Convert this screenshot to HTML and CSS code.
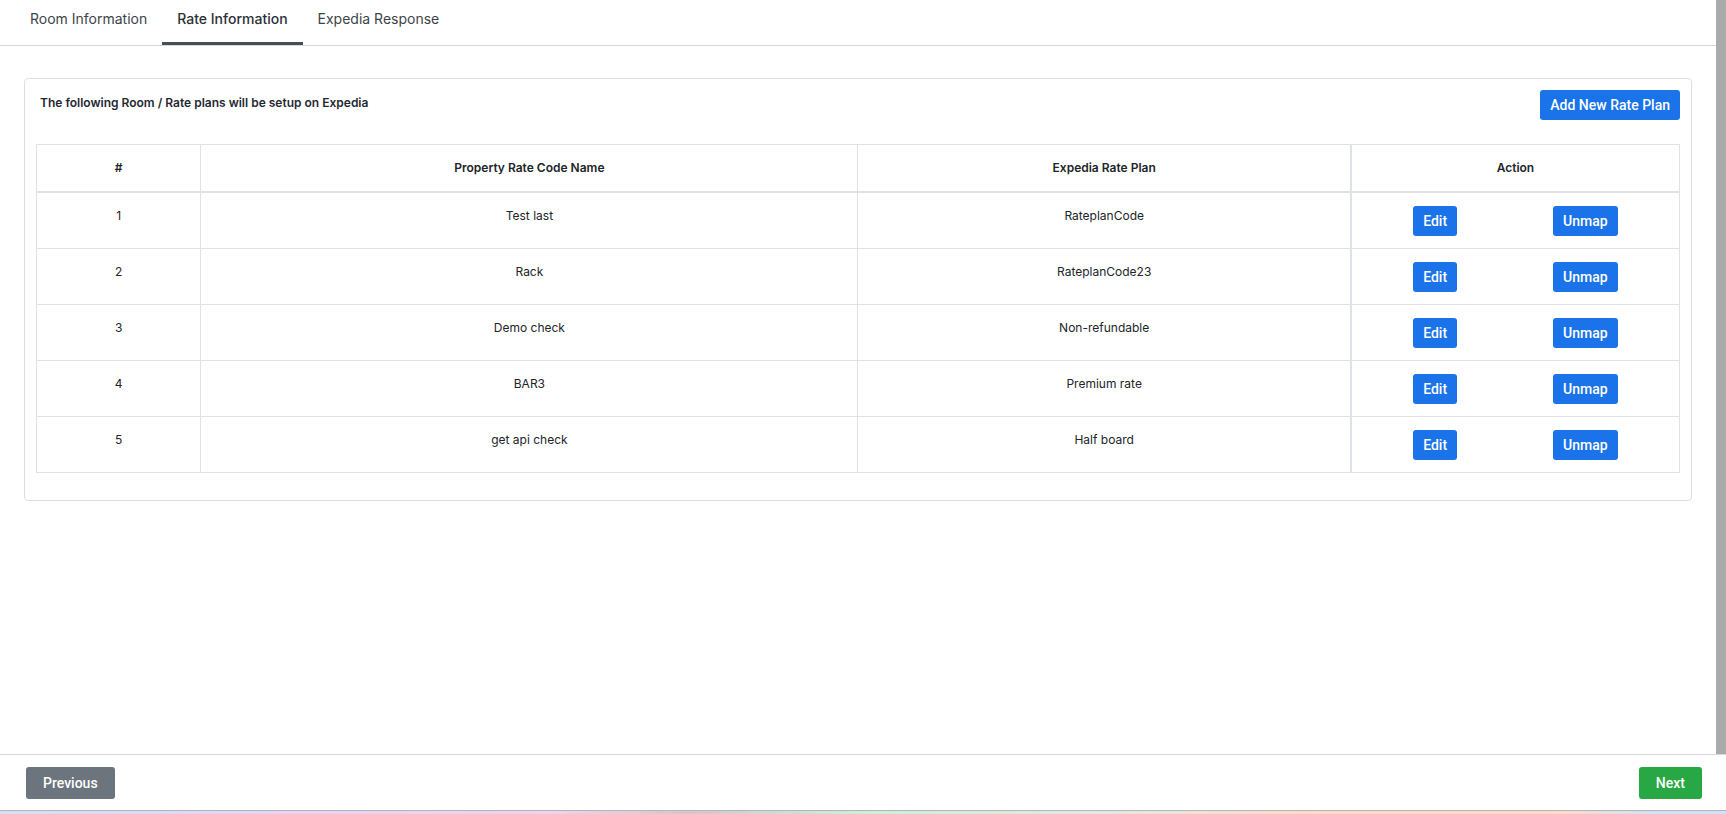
FILE: index.html
```html
<!DOCTYPE html>
<html lang="en">
<head>
<meta charset="utf-8">
<title>Rate Information</title>
<link rel="stylesheet" href="styles.css">
</head>
<body>
<div class="app">
  <div class="main">
    <nav class="tabs">
      <div class="tab">Room Information</div>
      <div class="tab active">Rate Information</div>
      <div class="tab">Expedia Response</div>
    </nav>
    <div class="content">
      <div class="card">
        <div class="card-head">
          <div class="card-title">The following Room / Rate plans will be setup on Expedia</div>
          <button class="btn btn-blue btn-add">Add New Rate Plan</button>
        </div>
        <table class="grid">
          <colgroup>
            <col class="c1"><col class="c2"><col class="c3"><col class="c4">
          </colgroup>
          <thead>
            <tr><th>#</th><th>Property Rate Code Name</th><th>Expedia Rate Plan</th><th class="act">Action</th></tr>
          </thead>
          <tbody>
            <tr><td>1</td><td>Test last</td><td>RateplanCode</td><td class="act"><div class="acts"><button class="btn btn-blue btn-sm">Edit</button><button class="btn btn-blue btn-sm">Unmap</button></div></td></tr>
            <tr><td>2</td><td>Rack</td><td>RateplanCode23</td><td class="act"><div class="acts"><button class="btn btn-blue btn-sm">Edit</button><button class="btn btn-blue btn-sm">Unmap</button></div></td></tr>
            <tr><td>3</td><td>Demo check</td><td>Non-refundable</td><td class="act"><div class="acts"><button class="btn btn-blue btn-sm">Edit</button><button class="btn btn-blue btn-sm">Unmap</button></div></td></tr>
            <tr><td>4</td><td>BAR3</td><td>Premium rate</td><td class="act"><div class="acts"><button class="btn btn-blue btn-sm">Edit</button><button class="btn btn-blue btn-sm">Unmap</button></div></td></tr>
            <tr><td>5</td><td>get api check</td><td>Half board</td><td class="act"><div class="acts"><button class="btn btn-blue btn-sm">Edit</button><button class="btn btn-blue btn-sm">Unmap</button></div></td></tr>
          </tbody>
        </table>
      </div>
    </div>
  </div>
  <div class="rail"></div>
</div>
<footer class="footer">
  <button class="btn btn-gray btn-foot">Previous</button>
  <button class="btn btn-green btn-foot">Next</button>
</footer>
<div class="strip"></div>
</body>
</html>
```
FILE: styles.css
```css
* { box-sizing: border-box; }
html, body { margin: 0; padding: 0; }
body {
  width: 1726px;
  height: 814px;
  overflow: hidden;
  display: flex;
  flex-direction: column;
  background: #fff;
  font-family: Inter, "Noto Sans", sans-serif;
  color: #212529;
}
.app {
  height: 754px;
  flex: none;
  display: flex;
  flex-direction: row;
}
.main {
  flex: 1;
  min-width: 0;
}
.rail {
  width: 10px;
  background: #aaaaaa;
}
.tabs {
  display: flex;
  height: 46px;
  padding-left: 15px;
  border-bottom: 1px solid #d5d8db;
}
.tab {
  height: 45px;
  padding: 10px 15px 0;
  font-size: 14px;
  line-height: 18px;
  color: #3d4449;
  border-bottom: 3px solid transparent;
}
.tab.active {
  color: #2b3035;
  font-weight: 500;
  border-bottom-color: #454d55;
}
.content {
  padding: 32px 24px 0;
}
.card {
  border: 1px solid #dcdfe2;
  border-radius: 4px;
  padding: 11px 11px 27px 11px;
}
.card-head {
  display: flex;
  justify-content: space-between;
  align-items: flex-start;
  margin-bottom: 24px;
}
.card-title {
  padding: 4px 0 0 4px;
  font-size: 12px;
  line-height: 18px;
  font-weight: 600;
  color: #1f2933;
}
.btn {
  border: 0;
  color: #fff;
  font-family: Roboto, "Liberation Sans", sans-serif;
  font-weight: 500;
  border-radius: 3px;
  cursor: pointer;
  white-space: nowrap;
}
.btn-blue { background: #1a73e8; }
.btn-gray { background: #6c757d; }
.btn-green { background: #28a745; }
.btn-add {
  height: 30px;
  padding: 0 10px;
  font-size: 14px;
}
.btn-sm {
  height: 30px;
  padding: 0 10px;
  font-size: 14px;
}
.btn-foot {
  height: 32px;
  padding: 0 17px;
  font-size: 14px;
}
.grid {
  width: 100%;
  border-collapse: collapse;
  table-layout: fixed;
  font-size: 12px;
}
.c1 { width: 10%; }
.c2 { width: 40%; }
.c3 { width: 30%; }
.c4 { width: 20%; }
.grid th, .grid td {
  border: 1px solid #dee2e6;
  text-align: center;
  line-height: 18px;
}
.grid th {
  height: 47px;
  padding: 0 8px;
  font-weight: 600;
  vertical-align: middle;
  border-bottom: 2px solid #dee2e6;
}
.grid td {
  height: 56px;
  padding: 14px 8px 0;
  vertical-align: top;
  font-weight: 400;
}
.grid td.act {
  padding: 13px 8px 12px;
  border-left: 2px solid #dee2e6;
}
.grid th.act { border-left: 2px solid #dee2e6; }
.acts {
  display: flex;
  justify-content: center;
  gap: 96px;
}
.footer {
  height: 56px;
  flex: none;
  border-top: 1px solid #d5d8db;
  display: flex;
  justify-content: space-between;
  align-items: center;
  padding: 0 24px 0 26px;
}
.strip {
  height: 4px;
  flex: none;
  border-top: 1px solid #b4b4b4;
  background: linear-gradient(90deg, #d3e2f2 0%, #e2d6f4 13%, #ecd4ea 32%, #d8c6c8 40%, #c9f0da 50%, #e4e8e0 64%, #fbdcc6 77%, #fbdcc6 90%, #cfe3f6 96%);
}
```
